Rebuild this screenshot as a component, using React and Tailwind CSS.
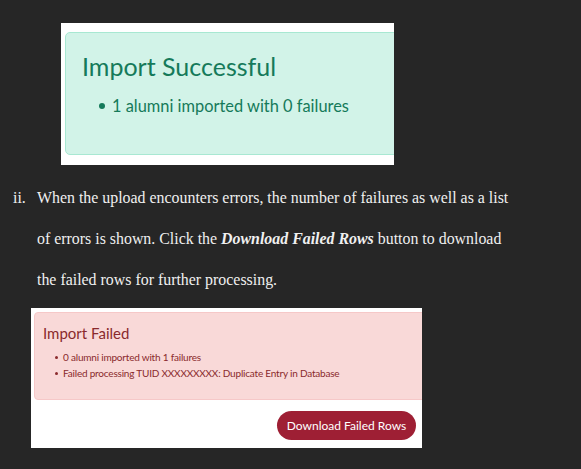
export default function App() {
  const sans = { fontFamily: "Lato, 'Noto Sans', sans-serif" };
  return (
    <div className="w-[581px] h-[469px] bg-[#262626] overflow-hidden">
      <div className="pt-[23px] pl-[61px]">
        <div className="w-[333px] h-[142px] bg-white overflow-hidden pl-[4px] pt-[9px]" style={sans}>
          <div className="w-[360px] h-[123px] bg-[#d2f3e8] border border-[#a8e8d2] rounded-[5px] pl-[16px] pt-[16px] text-[#157a5a]">
            <div className="text-[25px] leading-[34px]">Import Successful</div>
            <ul className="mt-[12px] pl-[19px] text-[16.4px] leading-[22px]">
              <li className="flex items-center">
                <span className="w-[6px] h-[6px] rounded-full bg-[#157a5a] mr-[7px] -ml-[2px]"></span>
                1 alumni imported with 0 failures
              </li>
            </ul>
          </div>
        </div>
      </div>
      <div
        className="mt-[12px] pl-[13px] text-[15.9px] leading-[41px] text-[#f0f0f0] flex"
        style={{ fontFamily: "'Liberation Serif', serif" }}
      >
        <span className="w-[24px] shrink-0">ii.</span>
        <p className="w-[530px] whitespace-nowrap">
          When the upload encounters errors, the number of failures as well as a list
          <br />
          of errors is shown. Click the <b><i>Download Failed Rows</i></b> button to download
          <br />
          the failed rows for further processing.
        </p>
      </div>
      <div className="mt-[8px] pl-[31px]">
        <div className="w-[391px] h-[140px] bg-white overflow-hidden pl-[3px] pt-[4px]" style={sans}>
          <div className="w-[420px] h-[88px] bg-[#f9d9d8] border border-[#f6c8c8] rounded-[4px] pl-[8px] pt-[10px] text-[#8a2a2c]">
            <div className="text-[15px] leading-[20px]">Import Failed</div>
            <ul className="mt-[6px] pl-[12px] text-[10px] tracking-[-0.2px] leading-[16px]">
              <li className="flex items-center">
                <span className="w-[3px] h-[3px] rounded-full bg-[#8a2a2c] mr-[5px]"></span>
                0 alumni imported with 1 failures
              </li>
              <li className="flex items-center">
                <span className="w-[3px] h-[3px] rounded-full bg-[#8a2a2c] mr-[5px]"></span>
                Failed processing TUID XXXXXXXXX: Duplicate Entry in Database
              </li>
            </ul>
          </div>
          <div className="flex justify-end pr-[6px] mt-[11px]">
            <button className="h-[29px] w-[139px] rounded-full bg-[#9e1f34] text-white text-[12px] flex items-center justify-center">
              Download Failed Rows
            </button>
          </div>
        </div>
      </div>
    </div>
  );
}
